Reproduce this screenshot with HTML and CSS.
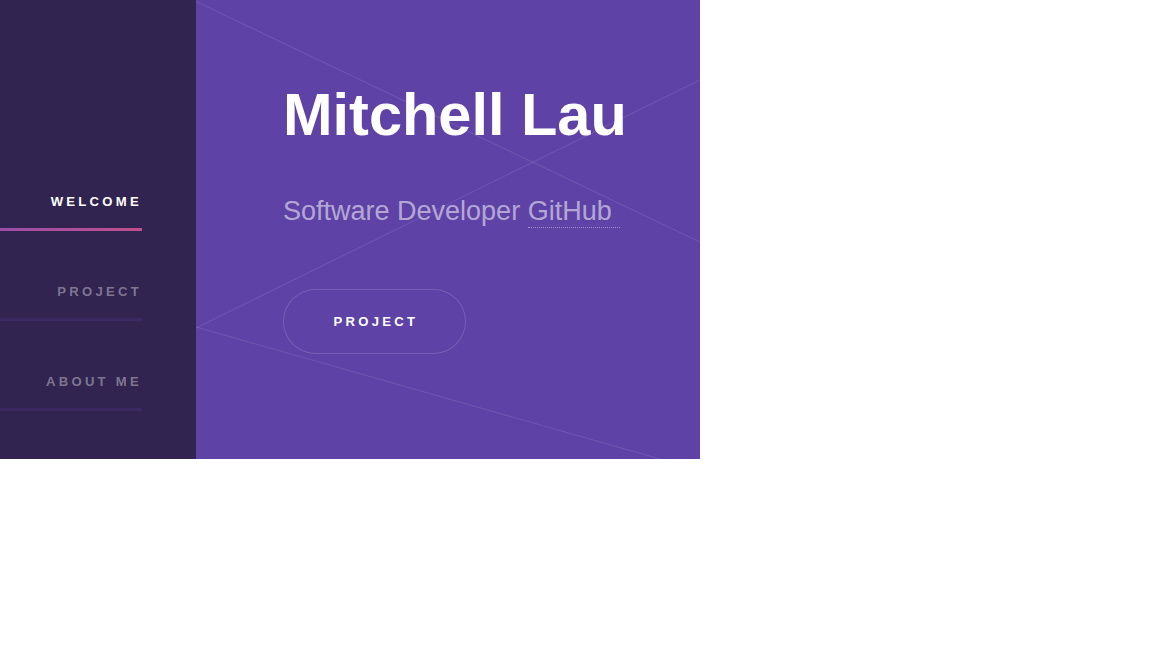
FILE: index.html
```html
<!DOCTYPE html>
<html lang="en">
<head>
<meta charset="utf-8">
<title>Mitchell Lau</title>
<link rel="stylesheet" href="styles.css">
</head>
<body>
<div class="page">
  <aside class="sidebar">
    <nav>
      <ul class="nav">
        <li><a class="nav-link active" href="#intro"><span>Welcome</span></a></li>
        <li><a class="nav-link" href="#project"><span>Project</span></a></li>
        <li><a class="nav-link" href="#about"><span>About me</span></a></li>
      </ul>
    </nav>
  </aside>
  <section class="intro" id="intro">
    <svg class="intro-lines" width="504" height="459" viewBox="0 0 504 459" aria-hidden="true">
      <line x1="0" y1="1.5" x2="504" y2="242" />
      <line x1="0" y1="328" x2="504" y2="80" />
      <line x1="0" y1="327" x2="464" y2="459" />
    </svg>
    <div class="intro-inner">
      <h1 class="title">Mitchell Lau</h1>
      <p class="subtitle">Software Developer <a class="sub-link" href="#">GitHub</a></p>
      <a class="button" href="#project">Project</a>
    </div>
  </section>
</div>
</body>
</html>
```

FILE: styles.css
```css
* { box-sizing: border-box; }

html, body {
  margin: 0;
  padding: 0;
  background: #ffffff;
}

body {
  font-family: "Liberation Sans", Arial, sans-serif;
}

.page {
  display: flex;
  width: 700px;
  height: 459px;
}

.sidebar {
  width: 196px;
  flex: 0 0 196px;
  background: #312450;
  padding-top: 141px;
}

.nav {
  list-style: none;
  margin: 0;
  padding: 0;
  width: 142px;
}

.nav-link {
  display: block;
  padding-top: 51px;
  line-height: 20px;
  text-align: right;
  text-decoration: none;
  text-transform: uppercase;
  font-size: 13.1px;
  font-weight: bold;
  letter-spacing: 0.25em;
  color: rgba(255, 255, 255, 0.38);
}

.nav-link::after {
  content: "";
  display: block;
  height: 3px;
  margin-top: 16px;
  background: rgba(94, 66, 166, 0.22);
}

.nav-link.active {
  color: #ffffff;
}

.nav-link.active::after {
  background: linear-gradient(to right, #9b4ea7, #c14e8e);
}

.intro {
  flex: 1 1 auto;
  position: relative;
  background: #5e42a6;
  overflow: hidden;
}

.intro-lines {
  position: absolute;
  left: 0;
  top: 0;
}

.intro-lines line {
  stroke: rgba(255, 255, 255, 0.1);
  stroke-width: 1.1;
}

.intro-inner {
  position: relative;
  padding: 82px 0 0 87px;
}

.title {
  margin: 0;
  font-size: 59.5px;
  line-height: 66px;
  font-weight: bold;
  color: #ffffff;
}

.subtitle {
  margin: 45.6px 0 0;
  font-size: 27px;
  line-height: 35px;
  color: rgba(255, 255, 255, 0.55);
}

.sub-link {
  color: inherit;
  text-decoration: none;
  padding-right: 8px;
  padding-bottom: 1px;
  border-bottom: 1px dotted rgba(255, 255, 255, 0.4);
}

.button {
  display: inline-flex;
  align-items: center;
  justify-content: center;
  margin-top: 60px;
  width: 183px;
  height: 65px;
  padding-left: 3px;
  border-radius: 33px;
  box-shadow: inset 0 0 0 1px rgba(255, 255, 255, 0.15);
  color: #ffffff;
  text-decoration: none;
  text-transform: uppercase;
  font-size: 13.1px;
  font-weight: bold;
  letter-spacing: 0.25em;
}
```
